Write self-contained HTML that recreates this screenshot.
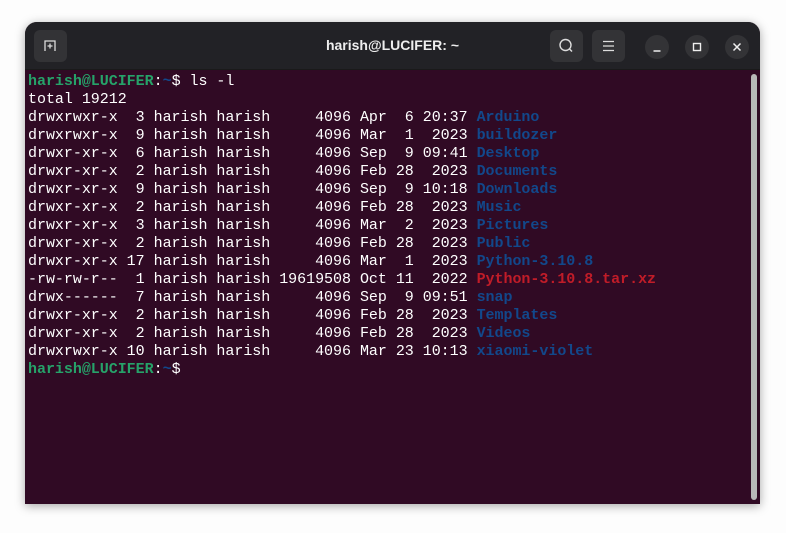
<!DOCTYPE html>
<html><head><style>
html,body{margin:0;padding:0;width:786px;height:533px;background:#fdfdfd;overflow:hidden}
.win{position:absolute;left:25px;top:22px;width:735px;height:482px;border-radius:12px 12px 0 0;overflow:hidden;box-shadow:0 2px 10px rgba(0,0,0,.35);background:#300a24}
.hd{position:absolute;left:0;top:0;width:100%;height:47px;background:#222226;border-bottom:1px solid #1a1a1a}
.btn{position:absolute;top:8px;width:33px;height:32px;border-radius:6px;background:#333336}
.cb{position:absolute;top:13px;width:24px;height:24px;border-radius:50%;background:#333336}
.title{position:absolute;left:0;right:0;top:15px;text-align:center;color:#eee;font:bold 14px "Liberation Sans",sans-serif}
pre{position:absolute;left:3px;top:51px;margin:0;font:15px/18px "Liberation Mono",monospace;color:#fff;letter-spacing:-0.03px}
.g{color:#26a269;font-weight:bold}.b{color:#12488b;font-weight:bold}.r{color:#c01c28;font-weight:bold}.t{color:#12488b;font-weight:bold}
.sb{position:absolute;left:726px;top:52px;width:6px;height:426px;border-radius:3px;background:#b8b8b8}
</style></head><body>
<div class="win">
<div class="hd">
<div class="btn" style="left:9px"><svg width="33" height="32"><path d="M11 21 V11 H21 V21 M13.5 16 H18.5 M16 13.5 V18.5" stroke="#ddd" stroke-width="1.3" fill="none"/></svg></div>
<div class="title">harish@LUCIFER: ~</div>
<div class="btn" style="left:525px"><svg width="33" height="32"><circle cx="15.5" cy="15" r="5.5" stroke="#ddd" stroke-width="1.4" fill="none"/><path d="M19.5 19 L22 21.5" stroke="#ddd" stroke-width="1.5"/></svg></div>
<div class="btn" style="left:567px"><svg width="33" height="32"><path d="M11 11.5H22M11 16H22M11 20.5H22" stroke="#ddd" stroke-width="1.3"/></svg></div>
<div class="cb" style="left:620px"><svg width="24" height="24"><path d="M8.5 16H15.5" stroke="#eee" stroke-width="1.5"/></svg></div>
<div class="cb" style="left:660px"><svg width="24" height="24"><rect x="8.5" y="8.5" width="7" height="7" stroke="#eee" stroke-width="1.4" fill="none"/></svg></div>
<div class="cb" style="left:700px"><svg width="24" height="24"><path d="M8.5 8.5L15.5 15.5M15.5 8.5L8.5 15.5" stroke="#eee" stroke-width="1.5"/></svg></div>
</div>
<pre><span class="g">harish@LUCIFER</span>:<span class="t">~</span>$ ls -l
total 19212
drwxrwxr-x  3 harish harish     4096 Apr  6 20:37 <span class="b">Arduino</span>
drwxrwxr-x  9 harish harish     4096 Mar  1  2023 <span class="b">buildozer</span>
drwxr-xr-x  6 harish harish     4096 Sep  9 09:41 <span class="b">Desktop</span>
drwxr-xr-x  2 harish harish     4096 Feb 28  2023 <span class="b">Documents</span>
drwxr-xr-x  9 harish harish     4096 Sep  9 10:18 <span class="b">Downloads</span>
drwxr-xr-x  2 harish harish     4096 Feb 28  2023 <span class="b">Music</span>
drwxr-xr-x  3 harish harish     4096 Mar  2  2023 <span class="b">Pictures</span>
drwxr-xr-x  2 harish harish     4096 Feb 28  2023 <span class="b">Public</span>
drwxr-xr-x 17 harish harish     4096 Mar  1  2023 <span class="b">Python-3.10.8</span>
-rw-rw-r--  1 harish harish 19619508 Oct 11  2022 <span class="r">Python-3.10.8.tar.xz</span>
drwx------  7 harish harish     4096 Sep  9 09:51 <span class="b">snap</span>
drwxr-xr-x  2 harish harish     4096 Feb 28  2023 <span class="b">Templates</span>
drwxr-xr-x  2 harish harish     4096 Feb 28  2023 <span class="b">Videos</span>
drwxrwxr-x 10 harish harish     4096 Mar 23 10:13 <span class="b">xiaomi-violet</span>
<span class="g">harish@LUCIFER</span>:<span class="t">~</span>$</pre>
<div class="sb"></div>
</div>
</body></html>
